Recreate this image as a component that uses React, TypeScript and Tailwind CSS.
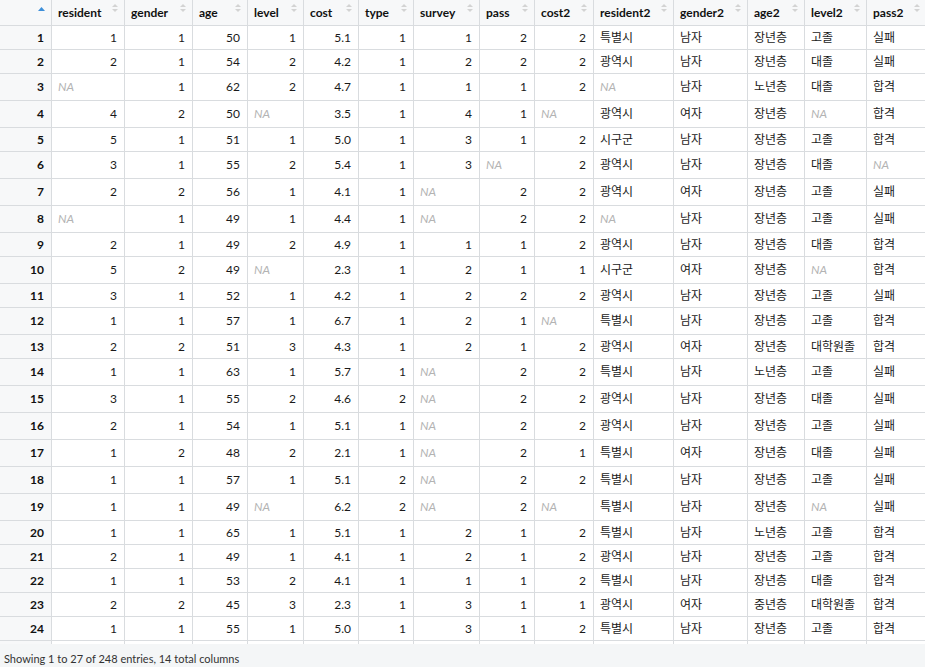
import React from "react";

type Col = { name: string; w: string; num: boolean };

const cols: Col[] = [
  { name: "resident", w: "w-[73px]", num: true },
  { name: "gender", w: "w-[68px]", num: true },
  { name: "age", w: "w-[55px]", num: true },
  { name: "level", w: "w-[56px]", num: true },
  { name: "cost", w: "w-[55px]", num: true },
  { name: "type", w: "w-[55px]", num: true },
  { name: "survey", w: "w-[66px]", num: true },
  { name: "pass", w: "w-[55px]", num: true },
  { name: "cost2", w: "w-[59px]", num: true },
  { name: "resident2", w: "w-[80px]", num: false },
  { name: "gender2", w: "w-[74px]", num: false },
  { name: "age2", w: "w-[57px]", num: false },
  { name: "level2", w: "w-[62px]", num: false },
  { name: "pass2", w: "w-[60px]", num: false },
];

const raw = `1,1,50,1,5.1,1,1,2,2,특별시,남자,장년층,고졸,실패
2,1,54,2,4.2,1,2,2,2,광역시,남자,장년층,대졸,실패
NA,1,62,2,4.7,1,1,1,2,NA,남자,노년층,대졸,합격
4,2,50,NA,3.5,1,4,1,NA,광역시,여자,장년층,NA,합격
5,1,51,1,5.0,1,3,1,2,시구군,남자,장년층,고졸,합격
3,1,55,2,5.4,1,3,NA,2,광역시,남자,장년층,대졸,NA
2,2,56,1,4.1,1,NA,2,2,광역시,여자,장년층,고졸,실패
NA,1,49,1,4.4,1,NA,2,2,NA,남자,장년층,고졸,실패
2,1,49,2,4.9,1,1,1,2,광역시,남자,장년층,대졸,합격
5,2,49,NA,2.3,1,2,1,1,시구군,여자,장년층,NA,합격
3,1,52,1,4.2,1,2,2,2,광역시,남자,장년층,고졸,실패
1,1,57,1,6.7,1,2,1,NA,특별시,남자,장년층,고졸,합격
2,2,51,3,4.3,1,2,1,2,광역시,여자,장년층,대학원졸,합격
1,1,63,1,5.7,1,NA,2,2,특별시,남자,노년층,고졸,실패
3,1,55,2,4.6,2,NA,2,2,광역시,남자,장년층,대졸,실패
2,1,54,1,5.1,1,NA,2,2,광역시,남자,장년층,고졸,실패
1,2,48,2,2.1,1,NA,2,1,특별시,여자,장년층,대졸,실패
1,1,57,1,5.1,2,NA,2,2,특별시,남자,장년층,고졸,실패
1,1,49,NA,6.2,2,NA,2,NA,특별시,남자,장년층,NA,실패
1,1,65,1,5.1,1,2,1,2,특별시,남자,노년층,고졸,합격
2,1,49,1,4.1,1,2,1,2,광역시,남자,장년층,고졸,합격
1,1,53,2,4.1,1,1,1,2,특별시,남자,장년층,대졸,합격
2,2,45,3,2.3,1,3,1,1,광역시,여자,중년층,대학원졸,합격
1,1,55,1,5.0,1,3,1,2,특별시,남자,장년층,고졸,합격`;

const rows = raw.split("\n").map((l) => l.split(","));

const font = {
  fontFamily: 'Lato, "Liberation Sans", "Noto Sans CJK KR", sans-serif',
};

function SortBoth() {
  return (
    <svg width="6" height="8" viewBox="0 0 6 8" className="mt-[4px] shrink-0">
      <path d="M0 3 L3 0 L6 3 Z" fill="#d3d3d3" />
      <path d="M0 5 L3 8 L6 5 Z" fill="#d3d3d3" />
    </svg>
  );
}

function SortAsc() {
  return (
    <svg width="7" height="4" viewBox="0 0 7 4" className="mt-[7px] shrink-0">
      <path d="M0 4 L3.5 0 L7 4 Z" fill="#3d8fd9" />
    </svg>
  );
}

export default function App() {
  return (
    <div
      className="w-[925px] h-[667px] overflow-hidden flex flex-col bg-[#f4f6f7] text-[12px] text-[#1a1a1a]"
      style={font}
    >
      <div className="h-[644px] overflow-hidden bg-white shrink-0">
        <div className="w-[927px]">
          {/* header */}
          <div className="flex h-[26px] border-b border-[#d9dcdf] bg-[#f7f8f9]">
            <div className="w-[52px] shrink-0 border-r border-[#d9dcdf] flex justify-end pr-[6px]">
              <SortAsc />
            </div>
            {cols.map((c) => (
              <div
                key={c.name}
                className={`${c.w} shrink-0 border-r border-[#d9dcdf] flex justify-between pl-[6px] pr-[6px]`}
              >
                <span className="font-bold leading-[26px] text-[#111]">{c.name}</span>
                <SortBoth />
              </div>
            ))}
          </div>
          {rows.map((r, i) => {
            const hasNA = r.includes("NA");
            return (
              <div
                key={i}
                className={`flex border-b border-[#d9dcdf] ${hasNA ? "h-[27px]" : "h-[24px]"}`}
              >
                <div className="w-[52px] shrink-0 border-r border-[#d9dcdf] bg-[#f7f8f9] flex items-center justify-end pr-[7px] font-bold text-[#111]">
                  {i + 1}
                </div>
                {cols.map((c, j) => {
                  const v = r[j];
                  const na = v === "NA";
                  return (
                    <div
                      key={c.name}
                      className={`${c.w} shrink-0 border-r border-[#d9dcdf] flex items-center ${
                        c.num && !na ? "justify-end pr-[7px]" : "justify-start pl-[6px]"
                      }`}
                    >
                      {na ? (
                        <span className="italic text-[#b3b3b3]">NA</span>
                      ) : (
                        <span>{v}</span>
                      )}
                    </div>
                  );
                })}
              </div>
            );
          })}
          {/* partially visible next row */}
          <div className="flex h-[24px]">
            <div className="w-[52px] shrink-0 border-r border-[#d9dcdf] bg-[#f7f8f9]" />
            {cols.map((c) => (
              <div key={c.name} className={`${c.w} shrink-0 border-r border-[#d9dcdf]`} />
            ))}
          </div>
        </div>
      </div>
      <div className="flex-1 pl-[4px] pt-[8px] leading-[14px] text-[11px] text-[#333]">
        Showing 1 to 27 of 248 entries, 14 total columns
      </div>
    </div>
  );
}
